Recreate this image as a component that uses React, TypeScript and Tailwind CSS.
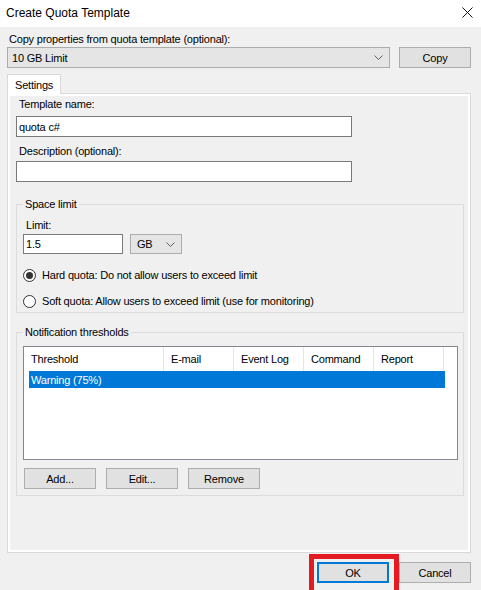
import React from 'react';

const Chevron: React.FC = () => (
  <svg width="9" height="5" viewBox="0 0 9 5" className="shrink-0">
    <polyline points="0.5,0.5 4.5,4.5 8.5,0.5" fill="none" stroke="#606060" strokeWidth="1" />
  </svg>
);

const Button: React.FC<{ label: string; primary?: boolean }> = ({ label, primary }) => (
  <button
    className={`h-[21px] w-[72px] bg-[#e1e1e1] text-black flex items-center justify-center ${
      primary ? 'border-2 border-[#0078d7]' : 'border border-[#adadad]'
    }`}
  >
    {label}
  </button>
);

const Radio: React.FC<{ checked?: boolean; label: string }> = ({ checked, label }) => (
  <div className="flex items-center h-4 ml-[6px]">
    <div className="w-[13px] h-[13px] rounded-full border border-[#333333] bg-white flex items-center justify-center">
      {checked && <div className="w-[7px] h-[7px] rounded-full bg-[#333333]" />}
    </div>
    <span className="ml-[6px]">{label}</span>
  </div>
);

const COLUMNS = [
  { name: 'Threshold', w: 'w-[140px]' },
  { name: 'E-mail', w: 'w-[70px]' },
  { name: 'Event Log', w: 'w-[70px]' },
  { name: 'Command', w: 'w-[70px]' },
  { name: 'Report', w: 'w-[70px]' },
];

const App: React.FC = () => {
  return (
    <div className="w-[481px] h-[590px] overflow-hidden bg-[#f0f0f0] text-black text-[11px] tracking-[-0.2px] font-['Liberation_Sans',Arial,sans-serif] leading-4">
      {/* title bar */}
      <div className="h-[27px] bg-white flex items-center justify-between pl-[6px] pr-[8px] text-[12px] tracking-normal">
        <span className="-mt-[2px]">Create Quota Template</span>
        <svg width="11" height="11" viewBox="0 0 11 11" className="-mt-[2px]">
          <path d="M0.5 0.5 L10.5 10.5 M10.5 0.5 L0.5 10.5" stroke="#111" strokeWidth="1" />
        </svg>
      </div>

      <div className="pl-[7px] pr-[10px] pt-[4px]">
        <div className="ml-[2px]">Copy properties from quota template (optional):</div>
        <div className="flex items-center gap-[9px]">
          <div className="h-[21px] flex-1 bg-[#e5e5e5] border border-[#acacac] flex items-center justify-between pl-[4px] pr-[6px]">
            <span>10 GB Limit</span>
            <Chevron />
          </div>
          <Button label="Copy" />
        </div>

        {/* tab */}
        <div className="mt-[6px] relative z-10 -mb-px h-[20px] w-[54px] bg-white border border-b-0 border-[#d9d9d9] pl-[7px] flex items-center">
          Settings
        </div>
        <div className="h-[460px] border border-[#d9d9d9] bg-white p-[2px]">
          <div className="h-full bg-[#f0f0f0] pl-[6px] pt-0">
            <div className="ml-[3px]">Template name:</div>
            <div className="mt-[4px] h-[21px] w-[336px] bg-white border border-[#7a7a7a] flex items-center pl-[2px]">
              quota c#
            </div>
            <div className="mt-[6px] ml-[3px]">Description (optional):</div>
            <div className="mt-[2px] h-[21px] w-[336px] bg-white border border-[#7a7a7a]" />

            <fieldset className="mt-[14px] w-[448px] border border-[#dcdcdc] pb-[3px]">
              <legend className="ml-[6px] px-[2px]">Space limit</legend>
              <div className="mt-[5px] ml-[9px]">Limit:</div>
              <div className="mt-px flex items-center ml-[6px]">
                <div className="h-[20px] w-[100px] bg-white border border-[#7a7a7a] flex items-center pl-[2px]">1.5</div>
                <div className="ml-[7px] h-[20px] w-[52px] bg-[#e5e5e5] border border-[#acacac] flex items-center justify-between pl-[6px] pr-[6px]">
                  <span>GB</span>
                  <Chevron />
                </div>
              </div>
              <div className="mt-[13px]">
                <Radio checked label="Hard quota: Do not allow users to exceed limit" />
              </div>
              <div className="mt-[10px]">
                <Radio label="Soft quota: Allow users to exceed limit (use for monitoring)" />
              </div>
            </fieldset>

            <fieldset className="mt-[11px] w-[448px] border border-[#dcdcdc] pb-[6px]">
              <legend className="ml-[6px] px-[2px]">Notification thresholds</legend>
              <div className="mt-[6px] ml-[6px] h-[114px] w-[435px] bg-white border border-[#828790]">
                <div className="flex h-[24px]">
                  {COLUMNS.map(c => (
                    <div
                      key={c.name}
                      className={`${c.w} h-full flex items-center pl-[7px] border-r border-[#e5e5e5]`}
                    >
                      {c.name}
                    </div>
                  ))}
                </div>
                <div className="ml-[5px] w-[416px] h-[17px] bg-[#0078d7] text-white flex items-center pl-[2px]">
                  Warning (75%)
                </div>
              </div>
              <div className="mt-[8px] ml-[7px] flex gap-[10px]">
                <Button label="Add..." />
                <Button label="Edit..." />
                <Button label="Remove" />
              </div>
            </fieldset>
          </div>
        </div>

        <div className="mt-[9px] flex justify-end gap-[10px]">
          <div className="relative">
            <Button label="OK" primary />
            <span className="absolute -left-[8px] -top-[8px] -right-[10px] -bottom-[12px] border-[5px] border-[#e31b23] pointer-events-none" />
          </div>
          <Button label="Cancel" />
        </div>
      </div>
    </div>
  );
};

export default App;
